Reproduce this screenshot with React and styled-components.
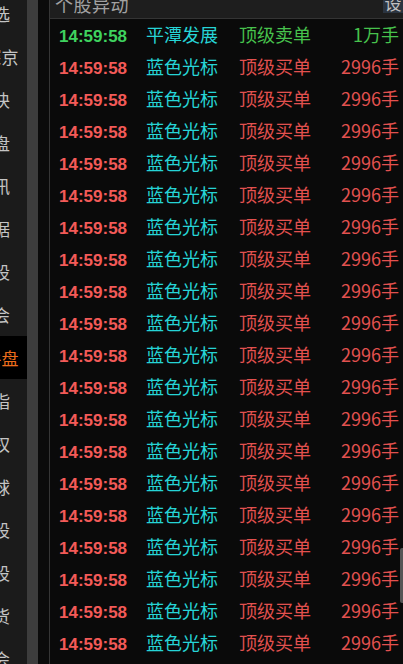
import React from "react";
import styled, { createGlobalStyle } from "styled-components";

const Global = createGlobalStyle`
  html, body { margin: 0; padding: 0; background: #0a0a0a; }
  body { width: 403px; height: 664px; overflow: hidden; }
  #root { width: 403px; height: 664px; }
`;

const Screen = styled.div`
  display: flex;
  width: 403px;
  height: 664px;
  overflow: hidden;
  background: #0a0a0a;
  font-family: "Noto Sans CJK SC", "Noto Sans", sans-serif;
  position: relative;
`;

const Sidebar = styled.nav`
  width: 27px;
  flex: none;
  background: #1b1b1b;
  overflow: hidden;
`;

const SideList = styled.div`
  width: 54px;
  margin-left: -27px;
  margin-top: -8px;
  display: flex;
  flex-direction: column;
`;

const SideItem = styled.div`
  height: 43px;
  flex: none;
  box-sizing: border-box;
  padding-right: 14px;
  display: flex;
  align-items: center;
  justify-content: center;
  white-space: nowrap;
  font-size: 17px;
  color: ${(p) => (p.$active ? "#ec6d1c" : "#c4c4c4")};
  background: ${(p) => (p.$active ? "#000" : "transparent")};
`;

const Track = styled.div`
  width: 11px;
  flex: none;
  background: #3d3d3d;
`;

const Gutter = styled.div`
  width: 11px;
  flex: none;
  background: #0b0b0b;
  border-right: 1px solid #363636;
`;

const Panel = styled.section`
  flex: 1;
  display: flex;
  flex-direction: column;
  min-width: 0;
`;

const Header = styled.header`
  height: 18px;
  flex: none;
  background: #1e1e1e;
  border-bottom: 1px solid #343434;
  display: flex;
  justify-content: space-between;
  align-items: flex-start;
  overflow: hidden;
  padding-left: 5px;
`;

const Title = styled.div`
  font-size: 18px;
  line-height: 8px;
  color: #a2a2a2;
  letter-spacing: 0.5px;
`;

const SetButton = styled.div`
  width: 20px;
  height: 13px;
  background: #2b3440;
  color: #c0c0c0;
  font-size: 17px;
  line-height: 6px;
  overflow: hidden;
  text-align: center;
`;

const List = styled.div`
  display: flex;
  flex-direction: column;
`;

const Row = styled.div`
  height: 32px;
  flex: none;
  display: grid;
  grid-template-columns: 88px 92px 1fr auto;
  align-items: center;
  padding-left: 9px;
  padding-right: 4px;
`;

const Time = styled.span`
  font-family: "Liberation Sans", Arial, sans-serif;
  font-weight: 700;
  font-size: 17px;
  padding-top: 4px;
  color: ${(p) => (p.$up ? "#3fd35f" : "#f35a58")};
`;

const Name = styled.span`
  font-size: 18px;
  padding-bottom: 2px;
  margin-left: -1px;
  color: #26d4d6;
`;

const Kind = styled.span`
  font-size: 18px;
  padding-bottom: 2px;
  color: ${(p) => (p.$up ? "#47c24d" : "#e2514f")};
`;

const Qty = styled.span`
  font-size: 18px;
  padding-bottom: 2px;
  text-align: right;
  color: ${(p) => (p.$up ? "#47c24d" : "#e2514f")};
`;

const ScrollThumb = styled.div`
  position: absolute;
  right: 0;
  top: 548px;
  width: 3px;
  height: 55px;
  border-radius: 2px 0 0 2px;
  background: #555;
`;

const sideItems = [
  "自选", "沪深京", "板块", "大盘", "资讯", "数据", "港股", "机会",
  "大手盘", "股指", "期权", "全球", "美股", "英股", "期货", "机会",
];

const rows = [
  { time: "14:59:58", name: "平潭发展", kind: "顶级卖单", qty: "1万手", up: true },
  ...Array.from({ length: 19 }, () => ({
    time: "14:59:58", name: "蓝色光标", kind: "顶级买单", qty: "2996手", up: false,
  })),
];

export default function App() {
  return (
    <>
      <Global />
      <Screen>
        <Sidebar>
          <SideList>
            {sideItems.map((s, i) => (
              <SideItem key={i} $active={i === 8}>{s}</SideItem>
            ))}
          </SideList>
        </Sidebar>
        <Track />
        <Gutter />
        <Panel>
          <Header>
            <Title>个股异动</Title>
            <SetButton>设</SetButton>
          </Header>
          <List>
            {rows.map((r, i) => (
              <Row key={i}>
                <Time $up={r.up}>{r.time}</Time>
                <Name>{r.name}</Name>
                <Kind $up={r.up}>{r.kind}</Kind>
                <Qty $up={r.up}>{r.qty}</Qty>
              </Row>
            ))}
          </List>
        </Panel>
        <ScrollThumb />
      </Screen>
    </>
  );
}
